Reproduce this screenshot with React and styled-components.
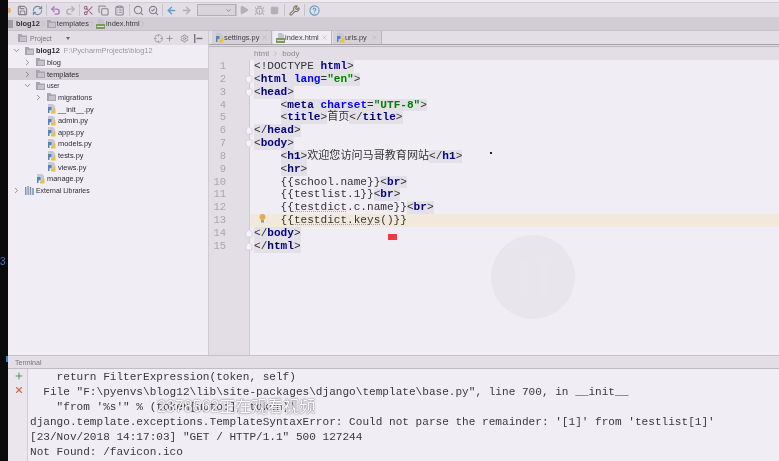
import React from "react";
import styled, { createGlobalStyle } from "styled-components";
import {
  Save, RefreshCw, Undo2, Redo2, Scissors, Copy, ClipboardList, Search, SearchCheck,
  ArrowLeft, ArrowRight, Play, Bug, Square, Wrench, HelpCircle, ChevronRight, ChevronDown,
  Crosshair, Settings, Plus, X,
} from "lucide-react";

const GlobalStyle = createGlobalStyle`
  html, body { margin: 0; padding: 0; background: #f1edf5; overflow: hidden; }
  #root { width: 779px; height: 461px; }
  svg { flex: none; }
`;

const uiFont = `"Liberation Sans", Arial, sans-serif`;
const monoFont = `"Liberation Mono", "Noto Sans CJK SC", monospace`;

/* little file and folder pictures */
const PyIcon = () => (
  <svg width="9" height="10" viewBox="0 0 9 10">
    <path d="M1 0h5l2 2v5H1z" fill="#c9c8d2" />
    <path d="M1 5V3h3.5v3H2.5v3H1z" fill="#4a86c0" />
    <path d="M8.5 4.5V9.5H4V7h2.5V4.5z" fill="#e8c23e" />
  </svg>
);

const HtmlIcon = () => (
  <svg width="9" height="10" viewBox="0 0 9 10">
    <path d="M2 0h4l2 2v4H2z" fill="#c4c3cb" />
    <rect x="0" y="5" width="9" height="5" fill="#7d9a5c" />
    <rect x="1" y="7" width="7" height="1" fill="#d8e2c8" />
  </svg>
);

const FolderIcon = () => (
  <svg width="9" height="8" viewBox="0 0 9 8">
    <path d="M0 0h3.5l1 1.5H9V8H0z" fill="#a8a5ae" />
    <rect x="2" y="3" width="6" height="4" fill="#c6c3ca" />
  </svg>
);

const LibIcon = () => (
  <svg width="10" height="9" viewBox="0 0 10 9">
    <rect x="0" y="1" width="1.4" height="8" fill="#8d8a94" />
    <rect x="2.4" y="0" width="1.4" height="9" fill="#6f9ccb" />
    <rect x="4.8" y="1" width="1.4" height="8" fill="#8d8a94" />
    <rect x="7.2" y="2" width="1.6" height="7" fill="#6f9ccb" />
  </svg>
);

const PinIcon = () => (
  <svg width="9" height="9" viewBox="0 0 9 9">
    <rect x="0" y="0" width="1.4" height="9" fill="#77747c" />
    <rect x="2.5" y="3.8" width="6" height="1.4" fill="#77747c" />
  </svg>
);

const BulbIcon = () => (
  <svg width="7" height="9" viewBox="0 0 7 9">
    <circle cx="3.5" cy="3" r="3" fill="#e0b050" />
    <rect x="2" y="6" width="3" height="2.6" fill="#a79a80" />
  </svg>
);

const FoldIcon = ({ $up }) => (
  <svg width="8" height="9" viewBox="0 0 8 9">
    <path
      d={$up ? "M1 8V3l3-2.5L7 3v5z" : "M1 1v5l3 2.5L7 6V1z"}
      fill="#f6f3f8"
      stroke="#cfcbd2"
      strokeWidth="0.8"
    />
  </svg>
);

/* page frame */
const Page = styled.div`
  position: relative;
  width: 779px;
  height: 461px;
  display: flex;
  overflow: hidden;
  background: #f1edf5;
  font-family: ${uiFont};
  filter: blur(0.45px);
`;

const BlackEdge = styled.div`
  width: 8px;
  flex: none;
  background: #0b0b0d;
  display: flex;
  flex-direction: column;
  padding-top: 256px;
  box-sizing: border-box;
  color: #3d7fc4;
  font-size: 10px;
  line-height: 12px;
`;

const EdgeTick = styled.div`
  width: 2px;
  height: 6px;
  margin: 88px 0 0 6px;
  background: #3d7fc4;
`;

const Shell = styled.div`
  flex: 1;
  min-width: 0;
  display: flex;
  flex-direction: column;
`;

const TopSliver = styled.div`
  height: 2px;
  background: #efeaf0;
  border-bottom: 1px solid #d3ced6;
`;

const Toolbar = styled.div`
  height: 14px;
  flex: none;
  display: flex;
  align-items: center;
  padding-right: 6px;
  background: #e3dee5;
`;

const ToolStub = styled.div`
  width: 3px;
  height: 5px;
  margin-right: 3.5px;
  background: #e6b45c;
  border-radius: 0 2px 2px 0;
`;

const ToolGroup = styled.div`
  display: flex;
`;

const ToolCell = styled.div`
  width: ${(p) => p.$width || 15}px;
  height: 14px;
  display: flex;
  align-items: center;
  justify-content: center;
  color: ${(p) => p.$color || "#85828a"};
`;

const ToolSep = styled.div`
  width: 1px;
  height: 12px;
  margin: 0 ${(p) => p.$space ?? 1}px;
  background: #c8c3ca;
`;

const ToolSelect = styled.div`
  width: 39px;
  height: 12px;
  box-sizing: border-box;
  margin: 0 0 0 3px;
  border: 1px solid #b2aeb5;
  background: #d9d4db;
  display: flex;
  align-items: center;
  justify-content: flex-end;
  padding-right: 3px;
  color: #66636a;
`;

const NavBar = styled.div`
  height: 14px;
  flex: none;
  box-sizing: border-box;
  display: flex;
  align-items: center;
  background: #d2cdd4;
  border-bottom: 1px solid #c6c1c8;
  font-size: 7.4px;
  color: #3a383e;
`;

const NavStub = styled.div`
  width: 5px;
  height: 8px;
  margin-right: 3px;
  background: #9f9ca5;
`;

const NavRoot = styled.span`
  font-weight: 700;
  font-size: 7.4px;
  color: #333136;
`;

const NavArrow = styled(ChevronRight)`
  color: #aaa6ad;
  margin: 0 -1.5px;
`;

const NavIcon = styled.div`
  display: flex;
  align-items: center;
  margin-right: 1px;
`;

const Main = styled.div`
  height: 324px;
  flex: none;
  display: flex;
`;

/* project tree */
const Sidebar = styled.div`
  width: 201px;
  flex: none;
  display: flex;
  flex-direction: column;
  border-right: 1px solid #d0cbd2;
  box-sizing: border-box;
`;

const PanelHead = styled.div`
  height: 14px;
  flex: none;
  display: flex;
  align-items: center;
  padding-left: 10px;
  background: #e3dee5;
  font-size: 7px;
  color: #77747c;
`;

const PanelLabel = styled.span`
  margin-left: 3px;
  width: 36px;
`;

const PanelCaret = styled.span`
  width: 0;
  height: 0;
  border: 2px solid transparent;
  border-top: 3px solid #67646c;
  margin-top: 3px;
  margin-right: 82px;
`;

const PanelTool = styled.div`
  width: 12px;
  margin-left: ${(p) => p.$shift || 0}px;
  display: flex;
  justify-content: center;
  color: #85828a;
`;

const Tree = styled.div`
  display: flex;
  flex-direction: column;
`;

const TreeRow = styled.div`
  height: 11.65px;
  display: flex;
  align-items: center;
  padding-left: ${(p) => 4 + p.$depth * 11}px;
  background: ${(p) => (p.$selected ? "#d3ced5" : "transparent")};
  color: #2e2c32;
  white-space: nowrap;
`;

const TreeArrow = styled.div`
  width: 13px;
  flex: none;
  display: flex;
  align-items: center;
  color: #55525a;
`;

const TreeIcon = styled.div`
  width: 10px;
  flex: none;
  display: flex;
  align-items: center;
  margin-right: 1px;
`;

const TreeName = styled.span`
  font-weight: ${(p) => (p.$bold ? 700 : 400)};
  font-size: ${(p) => p.$size || 7.4}px;
`;

const TreePath = styled.span`
  margin-left: 4px;
  color: #9a979e;
  font-size: 7.4px;
`;

/* editor */
const Editor = styled.div`
  flex: 1;
  min-width: 0;
  display: flex;
  flex-direction: column;
  background: #e3dee5;
`;

const TabBar = styled.div`
  height: 13px;
  flex: none;
  display: flex;
  padding-left: 3px;
  margin-bottom: 1px;
  border-bottom: 1px solid #a39fa6;
`;

const Tab = styled.div`
  width: ${(p) => p.$width}px;
  display: flex;
  align-items: center;
  box-sizing: border-box;
  padding-left: 3px;
  margin-right: 1px;
  background: ${(p) => (p.$active ? "#f0ecf3" : "#d6d1d8")};
  border-right: 1px solid #b9b5bc;
  font-size: 7.4px;
  color: #3f3d43;
`;

const TabClose = styled(X)`
  margin-left: auto;
  margin-right: 3px;
  color: #b3afb6;
`;

const Crumbs = styled.div`
  height: 14px;
  flex: none;
  display: flex;
  align-items: center;
  gap: 3px;
  box-sizing: border-box;
  border-top: 1px solid #b9b5bc;
  padding-left: 45px;
  font-size: 8px;
  color: #8a878e;
`;

const CodeArea = styled.div`
  flex: 1;
  min-height: 0;
  display: flex;
  flex-direction: column;
  position: relative;
  background: #f1edf5;
`;

const GutterFill = styled.div`
  position: absolute;
  left: 0;
  top: 0;
  bottom: 0;
  width: 40px;
  background: #e3dee5;
  border-right: 1px solid #cfcbd2;
`;

const CodeLine = styled.div`
  position: relative;
  height: 12.85px;
  display: flex;
  align-items: center;
`;

const LineNo = styled.div`
  width: 17px;
  flex: none;
  text-align: right;
  font: 10.5px/12.8px ${monoFont};
  color: #aaa6ad;
`;

const GutterRest = styled.div`
  width: 23px;
  flex: none;
`;

const FoldCol = styled.div`
  width: 8px;
  flex: none;
  margin: 0 -4px;
  position: relative;
  z-index: 1;
  display: flex;
  justify-content: center;
`;

const CodeCell = styled.div`
  flex: 1;
  align-self: stretch;
  min-width: 0;
  margin-left: 1px;
  padding-left: 4px;
  display: flex;
  align-items: center;
  background: ${(p) => (p.$current ? "#f2e9dc" : "transparent")};
  font: 11.08px/12.8px ${monoFont};
  white-space: pre;
  color: #333;
`;

const Indent = styled.span`
  width: ${(p) => p.$n * 6.65}px;
`;

const BulbSlot = styled.div`
  position: absolute;
  left: 49.5px;
  top: 153.5px;
  display: flex;
`;

const Tok = styled.span`
  color: ${(p) => p.$color || "#333"};
  font-weight: ${(p) => (p.$bold ? 700 : 400)};
  background: ${(p) => (p.$hl ? "#e4e0e7" : "transparent")};
  text-decoration: ${(p) => (p.$dot ? "underline dotted #a5a2a8" : "none")};
`;

/* terminal */
const Terminal = styled.div`
  flex: 1;
  min-height: 0;
  display: flex;
  flex-direction: column;
  border-top: 1px solid #c6c1c8;
`;

const TermHead = styled.div`
  height: 12px;
  flex: none;
  display: flex;
  align-items: center;
  padding-left: 7px;
  background: #e3dee5;
  border-bottom: 1px solid #c1bcc3;
  font-size: 7px;
  color: #77747c;
`;

const TermBody = styled.div`
  flex: 1;
  display: flex;
`;

const TermTools = styled.div`
  width: 20px;
  flex: none;
  display: flex;
  flex-direction: column;
  align-items: center;
  gap: 4px;
  padding-top: 2px;
  padding-left: 3px;
  box-sizing: border-box;
  background: #ebe6ed;
  border-right: 1px solid #d3ced6;
`;

const TermText = styled.div`
  margin-left: 2px;
  font: 11.08px/15px ${monoFont};
  white-space: pre;
  color: #3a383d;
  padding-top: 1px;
`;

/* things sitting over the page */
const RedMark = styled.div`
  position: absolute;
  left: 388px;
  top: 234px;
  width: 9px;
  height: 6px;
  background: #f2393f;
`;

const Speck = styled.div`
  position: absolute;
  left: 490px;
  top: 152px;
  width: 2px;
  height: 2px;
  background: #222;
`;

const PauseDisc = styled.div`
  position: absolute;
  left: 491px;
  top: 235px;
  width: 84px;
  height: 84px;
  border-radius: 50%;
  background: #e9e5ec;
  display: flex;
  justify-content: center;
  align-items: center;
  gap: 13px;
`;

const PauseBar = styled.div`
  width: 7px;
  height: 33px;
  background: #eae6ed;
`;

const Watermark = styled.div`
  position: absolute;
  left: 157px;
  top: 398px;
  font: 16px/18px "Liberation Sans", "Noto Sans CJK SC", sans-serif;
  color: #fff;
  text-shadow: 0 0 1px rgba(90, 85, 95, 0.9), 0 0 2px rgba(110, 105, 115, 0.7);
  white-space: nowrap;
`;

const tag = "#000080";
const attr = "#0000ff";
const str = "#008000";

const T = ({ children }) => <Tok $hl>{children}</Tok>;
const open = (name) => (
  <Tok $hl>
    {"<"}
    <Tok $color={tag} $bold>{name}</Tok>
    {">"}
  </Tok>
);
const shut = (name) => (
  <Tok $hl>
    {"</"}
    <Tok $color={tag} $bold>{name}</Tok>
    {">"}
  </Tok>
);

const codeLines = [
  { n: 1, body: <T>{"<!DOCTYPE "}<Tok $color={tag} $bold>html</Tok>{">"}</T> },
  {
    n: 2, fold: "down",
    body: <T>{"<"}<Tok $color={tag} $bold>html </Tok><Tok $color={attr} $bold>lang</Tok>{"="}<Tok $color={str} $bold>"en"</Tok>{">"}</T>,
  },
  { n: 3, fold: "down", body: open("head") },
  {
    n: 4, indent: 4,
    body: <T>{"<"}<Tok $color={tag} $bold>meta </Tok><Tok $color={attr} $bold>charset</Tok>{"="}<Tok $color={str} $bold>"UTF-8"</Tok>{">"}</T>,
  },
  { n: 5, indent: 4, body: <>{open("title")}<Tok>首页</Tok>{shut("title")}</> },
  { n: 6, fold: "up", body: shut("head") },
  { n: 7, fold: "down", body: open("body") },
  { n: 8, indent: 4, body: <>{open("h1")}<Tok>欢迎您访问马哥教育网站</Tok>{shut("h1")}</> },
  { n: 9, indent: 4, body: open("hr") },
  { n: 10, indent: 4, body: <><Tok>{"{{school.name}}"}</Tok>{open("br")}</> },
  { n: 11, indent: 4, body: <><Tok>{"{{testlist.1}}"}</Tok>{open("br")}</> },
  { n: 12, indent: 4, body: <><Tok>{"{{"}</Tok><Tok $dot>testdict</Tok><Tok>{".c.name}}"}</Tok>{open("br")}</> },
  { n: 13, indent: 4, current: true, body: <><Tok>{"{{"}</Tok><Tok $dot>testdict.keys</Tok><Tok>{"()}}"}</Tok></> },
  { n: 14, fold: "up", body: shut("body") },
  { n: 15, fold: "up", body: shut("html") },
];

const treeRows = [
  { depth: 1, arrow: "right", icon: <FolderIcon />, name: "blog" },
  { depth: 1, arrow: "right", icon: <FolderIcon />, name: "templates", selected: true },
  { depth: 1, arrow: "down", icon: <FolderIcon />, name: "user", size: 6.4 },
  { depth: 2, arrow: "right", icon: <FolderIcon />, name: "migrations" },
  { depth: 2, icon: <PyIcon />, name: "__init__.py" },
  { depth: 2, icon: <PyIcon />, name: "admin.py" },
  { depth: 2, icon: <PyIcon />, name: "apps.py" },
  { depth: 2, icon: <PyIcon />, name: "models.py" },
  { depth: 2, icon: <PyIcon />, name: "tests.py" },
  { depth: 2, icon: <PyIcon />, name: "views.py" },
  { depth: 1, icon: <PyIcon />, name: "manage.py" },
  { depth: 0, arrow: "right", icon: <LibIcon />, name: "External Libraries", size: 6.9 },
];

const terminalText = `    return FilterExpression(token, self)
  File "F:\\pyenvs\\blog12\\lib\\site-packages\\django\\template\\base.py", line 700, in __init__
    "from '%s'" % (token[upto:], token))
django.template.exceptions.TemplateSyntaxError: Could not parse the remainder: '[1]' from 'testlist[1]'
[23/Nov/2018 14:17:03] "GET / HTTP/1.1" 500 127244
Not Found: /favicon.ico`;

const Arrow = ({ kind }) => {
  if (kind === "right") return <ChevronRight size={9} strokeWidth={1.6} />;
  if (kind === "down") return <ChevronDown size={9} strokeWidth={1.6} />;
  return null;
};

const App = () => (
  <Page>
    <GlobalStyle />
    <BlackEdge>
      3
      <EdgeTick />
    </BlackEdge>
    <Shell>
      <TopSliver />
      <Toolbar>
        <ToolStub />
        <ToolGroup>
          <ToolCell><Save size={11} strokeWidth={2.4} /></ToolCell>
          <ToolCell $color="#6f8ba3"><RefreshCw size={11} strokeWidth={2.4} /></ToolCell>
        </ToolGroup>
        <ToolSep />
        <ToolGroup>
          <ToolCell $color="#a47fbd"><Undo2 size={11} strokeWidth={3} /></ToolCell>
          <ToolCell $color="#b3afb7"><Redo2 size={11} strokeWidth={3} /></ToolCell>
        </ToolGroup>
        <ToolSep />
        <ToolGroup>
          <ToolCell $color="#9a6a86"><Scissors size={11} strokeWidth={2.2} /></ToolCell>
          <ToolCell $width={16}><Copy size={11} strokeWidth={2.2} /></ToolCell>
          <ToolCell $width={16}><ClipboardList size={11} strokeWidth={2.2} /></ToolCell>
        </ToolGroup>
        <ToolSep />
        <ToolGroup>
          <ToolCell><Search size={11} strokeWidth={2.4} /></ToolCell>
          <ToolCell><SearchCheck size={11} strokeWidth={2.4} /></ToolCell>
        </ToolGroup>
        <ToolSep />
        <ToolGroup>
          <ToolCell $color="#5a9fd0"><ArrowLeft size={11} strokeWidth={3} /></ToolCell>
          <ToolCell $color="#b3afb7"><ArrowRight size={11} strokeWidth={3} /></ToolCell>
        </ToolGroup>
        <ToolSelect><ChevronDown size={7} strokeWidth={2} /></ToolSelect>
        <ToolSep $space={0} />
        <ToolGroup>
          <ToolCell $color="#b3afb7"><Play size={10} fill="#b3afb7" /></ToolCell>
          <ToolCell $color="#b3afb7"><Bug size={11} strokeWidth={2.2} /></ToolCell>
          <ToolCell $color="#b3afb7"><Square size={9} fill="#b3afb7" /></ToolCell>
        </ToolGroup>
        <ToolSep $space={2} />
        <ToolCell $color="#7c7960"><Wrench size={11} strokeWidth={2.4} /></ToolCell>
        <ToolSep $space={2} />
        <ToolCell $color="#5a9fd0"><HelpCircle size={11} strokeWidth={2.4} /></ToolCell>
      </Toolbar>
      <NavBar>
        <NavStub />
        <NavRoot>blog12</NavRoot>
        <NavArrow size={10} strokeWidth={1} />
        <NavIcon><FolderIcon /></NavIcon>
        <span>templates</span>
        <NavArrow size={10} strokeWidth={1} />
        <NavIcon><HtmlIcon /></NavIcon>
        <span>index.html</span>
        <NavArrow size={10} strokeWidth={1} />
      </NavBar>
      <Main>
        <Sidebar>
          <PanelHead>
            <FolderIcon />
            <PanelLabel>Project</PanelLabel>
            <PanelCaret />
            <PanelTool><Crosshair size={9} strokeWidth={1.6} /></PanelTool>
            <PanelTool $shift={-1}><Plus size={9} strokeWidth={2} /></PanelTool>
            <PanelTool $shift={3}><Settings size={9} strokeWidth={2} /></PanelTool>
            <PanelTool $shift={2}><PinIcon /></PanelTool>
          </PanelHead>
          <Tree>
            <TreeRow $depth={0}>
              <TreeArrow><Arrow kind="down" /></TreeArrow>
              <TreeIcon><FolderIcon /></TreeIcon>
              <TreeName $bold>blog12</TreeName>
              <TreePath>F:\PycharmProjects\blog12</TreePath>
            </TreeRow>
            {treeRows.map((row) => (
              <TreeRow key={row.name} $depth={row.depth} $selected={row.selected}>
                <TreeArrow><Arrow kind={row.arrow} /></TreeArrow>
                <TreeIcon>{row.icon}</TreeIcon>
                <TreeName $size={row.size}>{row.name}</TreeName>
              </TreeRow>
            ))}
          </Tree>
        </Sidebar>
        <Editor>
          <TabBar>
            <Tab $width={60}><PyIcon />settings.py<TabClose size={7} /></Tab>
            <Tab $width={59} $active><HtmlIcon />index.html<TabClose size={7} /></Tab>
            <Tab $width={49}><PyIcon />urls.py<TabClose size={7} /></Tab>
          </TabBar>
          <Crumbs>
            <span>html</span>
            <ChevronRight size={7} strokeWidth={1.5} />
            <span>body</span>
          </Crumbs>
          <CodeArea>
            <GutterFill />
            {codeLines.map((line) => (
              <CodeLine key={line.n}>
                <LineNo>{line.n}</LineNo>
                <GutterRest />
                <FoldCol>{line.fold && <FoldIcon $up={line.fold === "up"} />}</FoldCol>
                <CodeCell $current={line.current}>
                  {line.indent && <Indent $n={line.indent} />}
                  {line.body}
                </CodeCell>
              </CodeLine>
            ))}
            <BulbSlot><BulbIcon /></BulbSlot>
          </CodeArea>
        </Editor>
      </Main>
      <Terminal>
        <TermHead>Terminal</TermHead>
        <TermBody>
          <TermTools>
            <Plus size={10} strokeWidth={2.4} color="#4e9a5b" />
            <X size={10} strokeWidth={2.6} color="#d0694a" />
          </TermTools>
          <TermText>{terminalText}</TermText>
        </TermBody>
      </Terminal>
    </Shell>
    <PauseDisc>
      <PauseBar />
      <PauseBar />
    </PauseDisc>
    <Speck />
    <RedMark />
    <Watermark>2378562正在观看视频</Watermark>
  </Page>
);

export default App;
